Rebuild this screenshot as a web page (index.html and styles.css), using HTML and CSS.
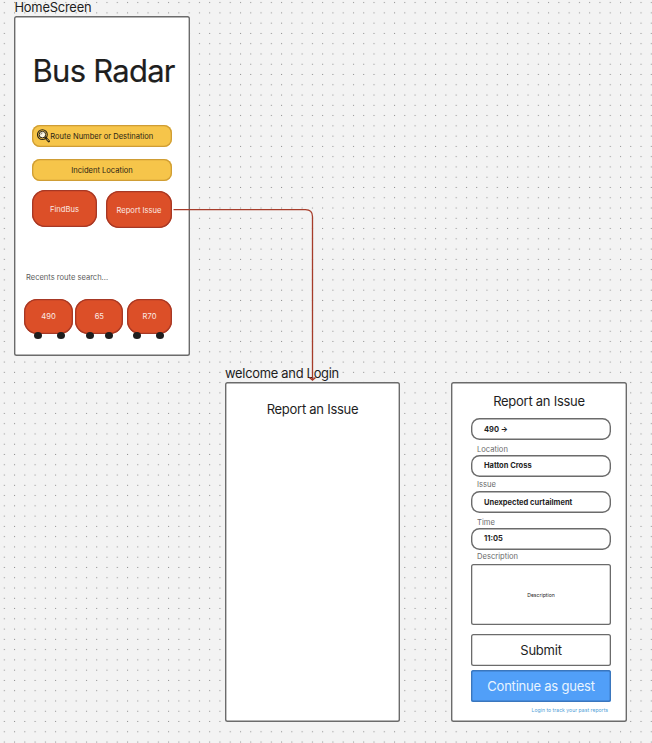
FILE: index.html
```html
<!DOCTYPE html>
<html lang="en">
<head>
<meta charset="utf-8">
<title>Bus Radar</title>
<link rel="stylesheet" href="styles.css">
</head>
<body>
<main class="board">
  <svg class="dots" width="652" height="743" aria-hidden="true">
    <defs><pattern id="grid" x="-0.9" y="-2.5" width="10.27" height="10.27" patternUnits="userSpaceOnUse"><rect x="4.7" y="4.6" width="1" height="1" fill="#8c8c8c"/></pattern></defs>
    <rect width="652" height="743" fill="url(#grid)"/>
  </svg>

  <div class="frame-name home-name">HomeScreen</div>
  <section class="frame home">
    <h1 class="brand">Bus Radar</h1>
    <div class="search">
      <svg class="lens" width="14" height="14" viewBox="0 0 14 14" fill="none" stroke="#2b2414">
        <circle cx="5.4" cy="5.6" r="4.9" stroke-width="1.1"/>
        <circle cx="5.4" cy="5.6" r="3.3" fill="#fbf6e4" stroke-width="1"/>
        <path d="M3.8 5.6a1.7 1.7 0 0 1 1.7-1.7" stroke-width=".6"/>
        <path d="M8.6 8.8L11.8 12.2" stroke-width="2.4" stroke-linecap="round"/>
        <path d="M9.7 9.9l2 2.1" stroke="#f6c54a" stroke-width=".8"/>
      </svg>
      <span>Route Number or Destination</span>
    </div>
    <div class="search incident"><span>Incident Location</span></div>
    <div class="actions">
      <div class="red find">FindBus</div>
      <div class="red report">Report Issue</div>
    </div>
    <p class="recents">Recents route search...</p>
    <div class="buses">
      <div class="bus bus-a"><div class="red">490</div><div class="wheels"><i></i><i></i></div></div>
      <div class="bus bus-b"><div class="red">65</div><div class="wheels"><i></i><i></i></div></div>
      <div class="bus bus-c"><div class="red">R70</div><div class="wheels"><i></i><i></i></div></div>
    </div>
  </section>

  <div class="frame-name welcome-name">welcome and Login</div>
  <section class="frame welcome">
    <h2 class="title">Report an Issue</h2>
  </section>

  <section class="frame form">
    <h2 class="title">Report an Issue</h2>
    <div class="field first">490 →</div>
    <div class="label l1">Location</div>
    <div class="field">Hatton Cross</div>
    <div class="label l2">Issue</div>
    <div class="field">Unexpected curtailment</div>
    <div class="label l3">Time</div>
    <div class="field">11:05</div>
    <div class="label l4">Description</div>
    <div class="area">Description</div>
    <div class="button">Submit</div>
    <div class="button guest">Continue as guest</div>
    <div class="login">Login to track your past reports</div>
  </section>

  <svg class="link" width="150" height="184" viewBox="0 0 150 184" fill="none" stroke="#a63c2a" stroke-width="1.3">
    <path d="M0.500 4.700H132.500Q139.500 4.700 139.500 11.700V174.500"/>
    <path d="M136.500 172.500L139.500 175L142.500 172.500" stroke-width="1.6"/>
  </svg>
</main>
</body>
</html>
```
FILE: styles.css
```css
* { box-sizing: border-box; }
body { margin: 0; font-family: Inter, "Liberation Sans", sans-serif; color: #1e1e1e; }
h1, h2, p { margin: 0; font-weight: 400; }
.board { position: relative; width: 652px; height: 743px; overflow: hidden; background: #f3f3f3; }
.dots { position: absolute; left: 0; top: 0; }
.link { position: absolute; left: 173px; top: 205px; }
.frame-name { position: absolute; font-size: 12.900px; letter-spacing: -0.270px; line-height: 16px; white-space: nowrap; }
.home-name { left: 14.500px; top: 0; letter-spacing: -0.220px; }
.welcome-name { left: 225px; top: 366px; }
.frame { position: absolute; width: 175px; height: 340px; background: #fff; border-radius: 2.500px; box-shadow: inset 0 0 0 1.400px #6b6b6b; white-space: nowrap; }
.home { left: 14px; top: 16px; width: 175.500px; }
.welcome { left: 225px; top: 382px; }
.form { left: 451px; top: 382px; width: 175.500px; padding: 0 15px 0 20px; }

.brand { padding: 35px 0 0 18.500px; font-size: 31px; letter-spacing: -0.740px; line-height: 40px; height: 109px; -webkit-text-stroke: 0.200px; }
.search { display: flex; align-items: center; width: 140px; height: 22px; margin: 0 0 12px 18px; padding-left: 5px; border-radius: 8px; background: #f6c54a; box-shadow: inset 0 0 0 1.300px #cf9d35; font-size: 7.550px; color: #2b2414; }
.search .lens { margin-right: -0.700px; }
.incident { justify-content: center; padding: 0; margin-bottom: 9px; }
.actions { display: flex; margin-left: 18px; gap: 9px; height: 38px; }
.red { display: flex; align-items: center; justify-content: center; border-radius: 13px; background: #dc4f28; box-shadow: inset 0 0 0 1.300px #a63825; color: #fbe9e3; font-size: 7.600px; }
.find { width: 65px; height: 37px; padding-top: 1px; }
.report { width: 66px; height: 37px; margin-top: 1px; padding-top: 1px; }
.recents { margin: 43px 0 0 12px; font-size: 7.550px; line-height: 14px; color: #5c5c5c; }
.buses { display: flex; margin: 14px 0 0 10px; }
.bus .red { height: 35px; }
.bus-a { width: 49px; margin-right: 2.300px; }
.bus-b { width: 48px; margin-right: 3.500px; }
.bus-c { width: 45.500px; }
.wheels { display: flex; justify-content: space-between; margin-top: -2px; padding: 0 8.500px 0 9.500px; }
.bus-b .wheels { padding: 0 10px 0 10.500px; }
.bus-c .wheels { padding: 0 8px 0 6.500px; }
.wheels i { width: 8px; height: 7px; border-radius: 50%; background: #1e1e1e; }

.title { text-align: center; font-size: 13px; letter-spacing: -0.260px; line-height: 18px; padding-top: 18px; }
.form .title { width: 136px; padding-top: 10px; height: 36px; }
.field { display: flex; align-items: center; width: 140px; height: 22px; padding-left: 13px; border-radius: 8.500px; box-shadow: inset 0 0 0 1.400px #6b6b6b; font-size: 7.500px; font-weight: 700; }
.label { padding-left: 6px; font-size: 7.600px; color: #6b6b6b; line-height: 9px; height: 14.500px; }
.l1 { padding-top: 5px; }
.l2 { padding-top: 3.500px; }
.l3 { padding-top: 5px; }
.l4 { padding-top: 2.500px; }
.area { display: flex; align-items: center; justify-content: center; width: 140px; height: 61px; border-radius: 2.500px; box-shadow: inset 0 0 0 1.300px #6b6b6b; font-size: 5.100px; }
.button { display: flex; align-items: center; justify-content: center; width: 140px; height: 32px; margin-top: 9px; border-radius: 2.500px; box-shadow: inset 0 0 0 1.300px #6b6b6b; font-size: 13px; letter-spacing: -0.220px; }
.guest { margin-top: 4px; background: #519ff8; box-shadow: inset 0 0 0 1.400px #3a76bd; color: #e8f4ff; }
.login { width: 137px; margin-top: 4px; text-align: right; font-size: 5.150px; line-height: 8px; color: #519fd8; }
```
